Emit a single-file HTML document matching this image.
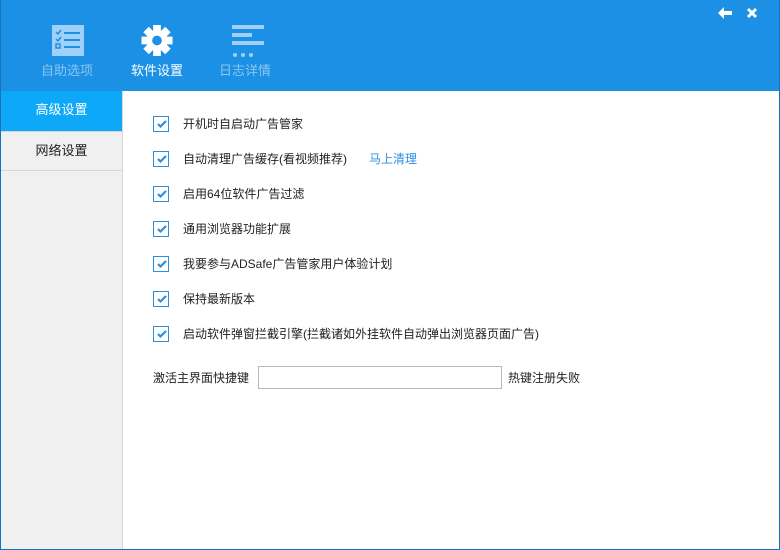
<!DOCTYPE html>
<html><head><meta charset="utf-8"><style>
*{margin:0;padding:0;box-sizing:border-box}
body{width:780px;height:550px;overflow:hidden;font-family:"Liberation Sans","Noto Sans CJK SC",sans-serif;font-size:12px;color:#222;background:#fff;position:relative}
.win{position:absolute;left:0;top:0;width:780px;height:550px;border:1px solid #1672bd;border-top:none}
.hdr{position:absolute;left:0;top:0;width:780px;height:91px;background:#1b90e4}
.tab{position:absolute;top:60px;font-size:13px;color:#8cc6f2;width:80px;text-align:center}
.side{position:absolute;left:1px;top:91px;width:122px;height:458px;background:#f0f0f0;border-right:1px solid #d6d6d6}
.si{height:40px;line-height:38px;text-align:center;font-size:13px;border-bottom:1px solid #d6d6d6}
.row{position:absolute;left:153px;height:16px;line-height:16px}
.cb{position:absolute;left:0;top:0;width:16px;height:16px;border:1px solid #2b8fe0;background:#fff}
.cb svg{position:absolute;left:2px;top:2px}
.row span{position:absolute;left:30px;white-space:nowrap;top:0}
</style></head><body>
<div class="hdr">
<svg style="position:absolute;left:52px;top:25px" width="32" height="31"><rect x="0" y="0" width="32" height="31" fill="#9fd0f8"/><g stroke="#1b90e4" stroke-width="2"><line x1="12" y1="8" x2="28" y2="8"/><line x1="12" y1="15" x2="28" y2="15"/><line x1="12" y1="22" x2="28" y2="22"/><rect x="4" y="19" width="4" height="4" fill="none" stroke-width="1.5"/><path d="M4 7l2 2 3-4M4 14l2 2 3-4" fill="none" stroke-width="1.5"/></g></svg>
<svg style="position:absolute;left:141px;top:25px" width="32" height="31" viewBox="-16 -16 32 32"><g fill="#fff"><circle r="11"/><g id="t"><rect x="-4" y="-16" width="8" height="8"/></g><use href="#t" transform="rotate(45)"/><use href="#t" transform="rotate(90)"/><use href="#t" transform="rotate(135)"/><use href="#t" transform="rotate(180)"/><use href="#t" transform="rotate(225)"/><use href="#t" transform="rotate(270)"/><use href="#t" transform="rotate(315)"/></g><circle r="5" fill="#1b90e4"/></svg>
<svg style="position:absolute;left:232px;top:25px" width="33" height="33"><g fill="#9fd0f8"><rect x="0" y="0" width="32" height="4"/><rect x="0" y="8" width="20" height="4"/><rect x="0" y="16" width="32" height="4"/><circle cx="3" cy="30" r="2"/><circle cx="11" cy="30" r="2"/><circle cx="19" cy="30" r="2"/></g></svg>
<div class="tab" style="left:27px">自助选项</div>
<div class="tab" style="left:117px;color:#fff">软件设置</div>
<div class="tab" style="left:205px">日志详情</div>
<svg style="position:absolute;left:718px;top:7px" width="14" height="12"><path d="M0 6L6 0V4H14V8H6V12Z" fill="#fff"/></svg>
<svg style="position:absolute;left:746px;top:7px" width="12" height="12"><path d="M2 2L10 10M10 2L2 10" stroke="#fff" stroke-width="3"/></svg>
</div>
<div class="side">
<div class="si" style="background:#0ea8f8;color:#fff;border-bottom:none">高级设置</div>
<div class="si" style="border-top:1px solid #d6d6d6">网络设置</div>
</div>
<div class="row" style="top:116px"><div class="cb"><svg width="12" height="10"><path d="M2 5l2.5 2.5L10 2" stroke="#2b8fe0" stroke-width="2.2" fill="none"/></svg></div><span>开机时自启动广告管家</span></div>
<div class="row" style="top:151px"><div class="cb"><svg width="12" height="10"><path d="M2 5l2.5 2.5L10 2" stroke="#2b8fe0" stroke-width="2.2" fill="none"/></svg></div><span>自动清理广告缓存(看视频推荐)</span><span style="left:216px;color:#2b8fe0">马上清理</span></div>
<div class="row" style="top:186px"><div class="cb"><svg width="12" height="10"><path d="M2 5l2.5 2.5L10 2" stroke="#2b8fe0" stroke-width="2.2" fill="none"/></svg></div><span>启用64位软件广告过滤</span></div>
<div class="row" style="top:221px"><div class="cb"><svg width="12" height="10"><path d="M2 5l2.5 2.5L10 2" stroke="#2b8fe0" stroke-width="2.2" fill="none"/></svg></div><span>通用浏览器功能扩展</span></div>
<div class="row" style="top:256px"><div class="cb"><svg width="12" height="10"><path d="M2 5l2.5 2.5L10 2" stroke="#2b8fe0" stroke-width="2.2" fill="none"/></svg></div><span>我要参与ADSafe广告管家用户体验计划</span></div>
<div class="row" style="top:291px"><div class="cb"><svg width="12" height="10"><path d="M2 5l2.5 2.5L10 2" stroke="#2b8fe0" stroke-width="2.2" fill="none"/></svg></div><span>保持最新版本</span></div>
<div class="row" style="top:326px"><div class="cb"><svg width="12" height="10"><path d="M2 5l2.5 2.5L10 2" stroke="#2b8fe0" stroke-width="2.2" fill="none"/></svg></div><span>启动软件弹窗拦截引擎(拦截诸如外挂软件自动弹出浏览器页面广告)</span></div>
<div style="position:absolute;left:153px;top:369px">激活主界面快捷键</div>
<div style="position:absolute;left:258px;top:366px;width:244px;height:23px;border:1px solid #b8b8b8"></div>
<div style="position:absolute;left:508px;top:369px">热键注册失败</div>
<div class="win"></div>
</body></html>
